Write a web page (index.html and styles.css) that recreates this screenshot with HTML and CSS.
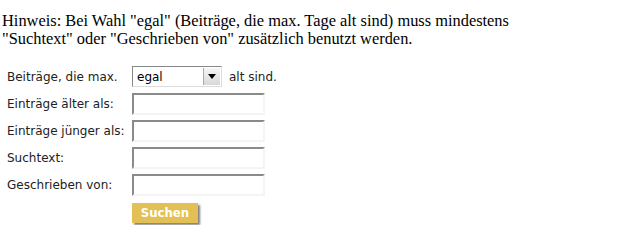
FILE: index.html
```html
<!DOCTYPE html>
<html lang="de">
<head>
    <meta charset="UTF-8">
    <title>Suche</title>
    <link rel="stylesheet" href="styles.css">
</head>
<body>
    <p class="hint">Hinweis: Bei Wahl "egal" (Beiträge, die max. Tage alt sind) muss mindestens<br>"Suchtext" oder "Geschrieben von" zusätzlich benutzt werden.</p>

    <form class="search">
        <div class="row">
            <label class="lbl">Beiträge, die max.</label>
            <span class="select"><span class="select-val">egal</span><span class="select-btn"><span class="arrow"></span></span></span>
            <span class="after">alt sind.</span>
        </div>
        <div class="row">
            <label class="lbl">Einträge älter als:</label>
            <input class="field" type="text">
        </div>
        <div class="row">
            <label class="lbl">Einträge jünger als:</label>
            <input class="field" type="text">
        </div>
        <div class="row">
            <label class="lbl">Suchtext:</label>
            <input class="field" type="text">
        </div>
        <div class="row">
            <label class="lbl">Geschrieben von:</label>
            <input class="field" type="text">
        </div>
        <div class="row">
            <span class="lbl"></span>
            <button class="btn" type="button">Suchen</button>
        </div>
    </form>
</body>
</html>
```

FILE: styles.css
```css
body{
    margin: 0;
    padding: 0;
    background: #fff;
    color: #000;
}
.hint{
    margin: 12px 0 0 2px;
    font-family: "Liberation Serif", serif;
    font-size: 16.4px;
    line-height: 18px;
}
.search{
    margin: 15px 0 0 7px;
    font-family: "DejaVu Sans", Verdana, sans-serif;
    font-size: 12px;
    color: #222;
}
.row{
    display: flex;
    align-items: center;
    height: 27px;
}
.lbl{
    width: 125px;
}
.select{
    display: flex;
    width: 90px;
    height: 21px;
    box-sizing: border-box;
    border: 1px solid #888;
    border-right-color: #ddd;
    border-bottom-color: #ddd;
    background: #fff;
}
.select-val{
    flex: 1;
    padding: 3px 0 0 4px;
    color: #000;
}
.select-btn{
    width: 16px;
    margin: 1px;
    background: linear-gradient(#f6f6f6, #d8d8d8);
    border-left: 1px solid #aaa;
    display: flex;
    align-items: center;
    justify-content: center;
}
.arrow{
    border-left: 4px solid transparent;
    border-right: 4px solid transparent;
    border-top: 5px solid #000;
}
.after{
    margin-left: 7px;
}
.field{
    width: 133px;
    height: 22px;
    box-sizing: border-box;
    margin: 0;
    border: 2px solid #f4f4f4;
    border-top-color: #8a8a8a;
    border-left-color: #8a8a8a;
    background: #fff;
}
.btn{
    width: 66px;
    height: 20px;
    margin-top: 2px;
    padding: 0;
    border: none;
    background: #e2c055;
    color: #fff;
    font-family: "DejaVu Sans Condensed", "DejaVu Sans", sans-serif;
    font-weight: bold;
    font-size: 13px;
    box-shadow: 2px 2px 2px rgba(0, 0, 0, 0.5);
}
```
